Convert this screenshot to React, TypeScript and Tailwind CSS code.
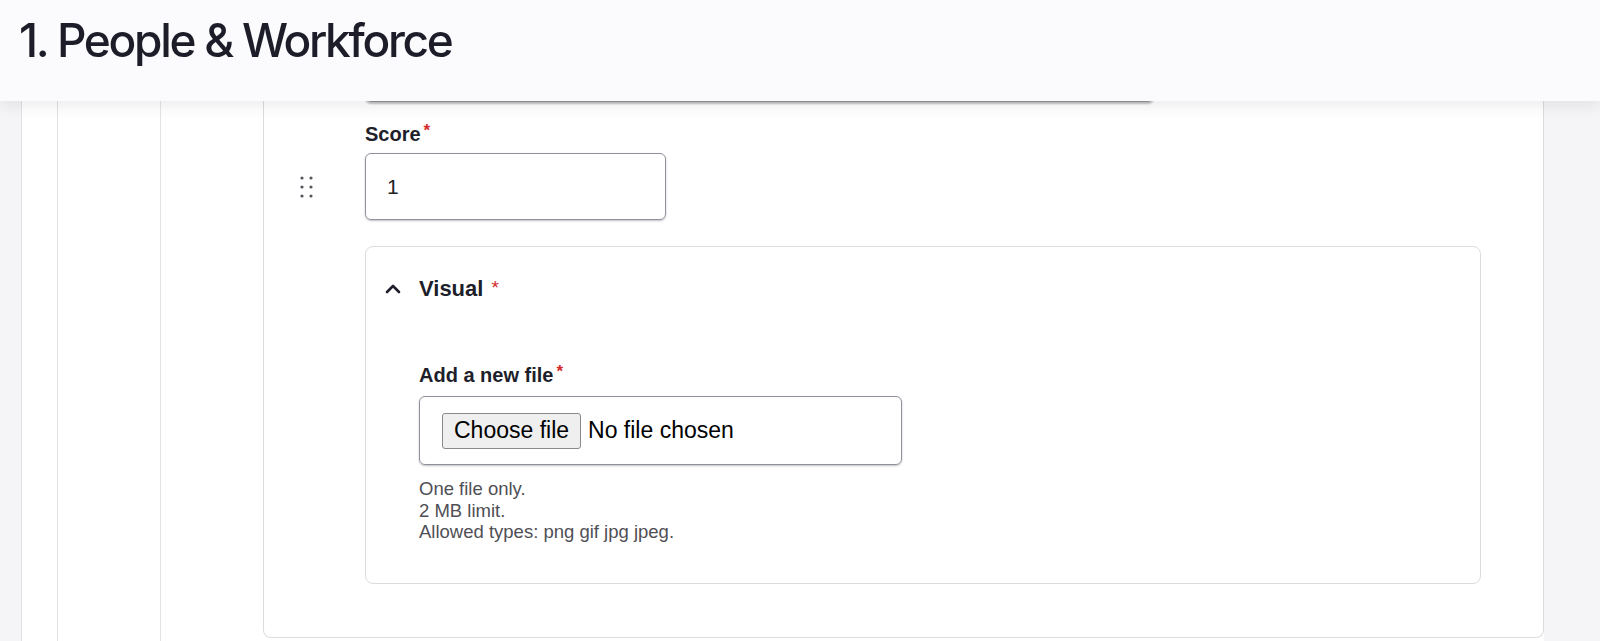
import { ChevronUp } from 'lucide-react'

function Req() {
  return <span className="ml-[3px] text-[#d42a2a] text-[17px] leading-none align-top">*</span>
}

function DragHandle() {
  return (
    <svg width="14" height="24" viewBox="0 0 14 24" className="text-[#55575f]">
      {[2, 11, 20].map((y) => (
        <g key={y}>
          <circle cx="2" cy={y} r="1.6" fill="currentColor" />
          <circle cx="11" cy={y} r="1.6" fill="currentColor" />
        </g>
      ))}
    </svg>
  )
}

export default function App() {
  const sans = { fontFamily: '"Liberation Sans", Arial, sans-serif' }

  return (
    <div className="relative h-[641px] w-[1600px] overflow-hidden bg-[#f5f5f8] text-[#1e1f2b]" style={sans}>
      {/* sticky section title over the scrolled form */}
      <div className="absolute inset-x-0 top-0 z-10 h-[101px] bg-[#fbfbfd]/95 backdrop-blur-md shadow-[0_6px_14px_rgba(0,0,0,0.07)] flex items-center pl-[19px] pb-[20px]">
        <h1 className="font-['Inter',sans-serif] font-medium text-[46px] tracking-[-0.05em] text-[#1c1d29]">
          1. People &amp; Workforce
        </h1>
      </div>

      <div className="pl-[21px] h-full">
        <div className="h-full w-[1523px] bg-white border-l border-[#e1e1e4]">
          <div className="ml-[35px] h-full border-l border-[#e1e1e4]">
            <div className="ml-[102px] h-full border-l border-[#e4e4e7]">
              <div className="ml-[102px] border border-t-0 border-[#dcdcdf] rounded-b-lg flex">
                <div className="w-[101px] shrink-0 pl-[36px] pt-[176px]">
                  <DragHandle />
                </div>

                <div className="flex-1 pb-[53px] pr-[62px]">
                  {/* previous answer, mostly hidden under the title bar */}
                  <div className="mt-[38px] w-[789px] h-[64px] rounded-md border border-[#8e929b] shadow-[0_2px_2px_rgba(0,0,0,0.25)] px-[22px] flex items-center text-[20px] text-[#9a9aa3]">
                    Investment in people and workforce development
                  </div>

                  <label className="mt-[20px] block text-[20px] font-bold leading-[24px]">
                    Score<Req />
                  </label>
                  <div className="mt-[7px] w-[301px] h-[67px] rounded-md border border-[#8e929b] shadow-[0_1px_2px_rgba(0,0,0,0.25)] flex items-center pl-[21px] text-[21px] text-[#222]">
                    1
                  </div>

                  <div className="mt-[26px] h-[338px] rounded-lg border border-[#dcdcdf]">
                    <div className="flex items-center pt-[30px] pl-[15px]">
                      <ChevronUp className="w-[24px] h-[24px] text-[#1e1f2b]" strokeWidth={2.6} />
                      <span className="ml-[14px] text-[22px] font-bold leading-[24px]">Visual</span>
                      <span className="ml-[8px] text-[#d42a2a] text-[19px] leading-none -mt-[4px]">*</span>
                    </div>

                    <div className="pl-[53px] pt-[62px]">
                      <label className="block text-[20px] font-bold leading-[24px]">
                        Add a new file<Req />
                      </label>
                      <div className="mt-[9px] w-[483px] h-[69px] rounded-md border border-[#8e929b] shadow-[0_1px_2px_rgba(0,0,0,0.25)] flex items-center pl-[22px]">
                        <span className="h-[36px] px-[11px] flex items-center bg-[#efefef] border border-[#8a8a8a] rounded-[3px] text-[23px] text-black">
                          Choose file
                        </span>
                        <span className="ml-[7px] text-[23px] text-black">No file chosen</span>
                      </div>
                      <div className="mt-[13px] text-[18.5px] leading-[21.5px] text-[#4f4f55]">
                        <p>One file only.</p>
                        <p>2 MB limit.</p>
                        <p>Allowed types: png gif jpg jpeg.</p>
                      </div>
                    </div>
                  </div>
                </div>
              </div>
            </div>
          </div>
        </div>
      </div>
    </div>
  )
}
